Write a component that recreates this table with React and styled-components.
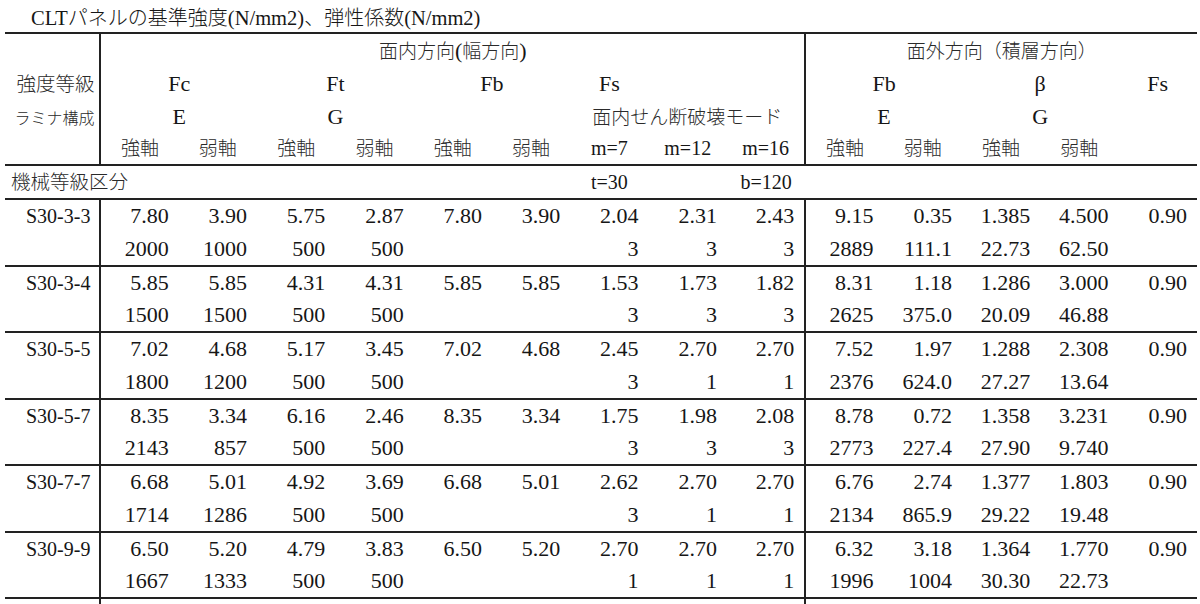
import React from "react";
import styled, { createGlobalStyle } from "styled-components";

const GlobalStyle = createGlobalStyle`
  html, body { margin: 0; padding: 0; background: #fff; }
  body {
    width: 1200px; height: 604px; overflow: hidden;
    font-family: "Liberation Serif", "Noto Sans CJK JP", serif;
    color: #161616;
  }
`;

const Page = styled.div`
  display: flex;
  flex-direction: column;
`;

const Title = styled.div`
  height: 32px;
  line-height: 34px;
  padding-left: 31px;
  font-size: 20.5px;
  white-space: nowrap;
`;

const Sheet = styled.table`
  table-layout: fixed;
  border-collapse: collapse;
  width: 1192px;
  margin-left: 5px;
`;

const Row = styled.tr`
  height: ${(p) => p.$h}px;
`;

const Cell = styled.td`
  padding: 0 ${(p) => (p.$align === "right" ? 10 : p.$align === "left" ? 6 : 0)}px 0
    ${(p) => (p.$align === "left" ? 6 : 0)}px;
  text-align: ${(p) => p.$align || "center"};
  font-size: ${(p) => p.$size || 22}px;
  vertical-align: middle;
  white-space: nowrap;
  border-right: ${(p) => (p.$divider ? "2px solid #222" : "none")};
  border-top: ${(p) => (p.$rule ? "2px solid #222" : "none")};
  line-height: 1;
`;

const Jp = styled.span`
  font-family: "Noto Sans CJK JP", sans-serif;
  font-weight: 300;
  color: #2a2a2a;
  font-size: ${(p) => p.$size || 19}px;
`;

const TitleJp = styled.span`
  font-family: "Noto Sans CJK JP", sans-serif;
  font-weight: 300;
  font-size: 20px;
`;

const NUM_COLS = 14;

const data = [
  {
    label: "S30-3-3",
    a: ["7.80", "3.90", "5.75", "2.87", "7.80", "3.90", "2.04", "2.31", "2.43", "9.15", "0.35", "1.385", "4.500", "0.90"],
    b: ["2000", "1000", "500", "500", "", "", "3", "3", "3", "2889", "111.1", "22.73", "62.50", ""],
  },
  {
    label: "S30-3-4",
    a: ["5.85", "5.85", "4.31", "4.31", "5.85", "5.85", "1.53", "1.73", "1.82", "8.31", "1.18", "1.286", "3.000", "0.90"],
    b: ["1500", "1500", "500", "500", "", "", "3", "3", "3", "2625", "375.0", "20.09", "46.88", ""],
  },
  {
    label: "S30-5-5",
    a: ["7.02", "4.68", "5.17", "3.45", "7.02", "4.68", "2.45", "2.70", "2.70", "7.52", "1.97", "1.288", "2.308", "0.90"],
    b: ["1800", "1200", "500", "500", "", "", "3", "1", "1", "2376", "624.0", "27.27", "13.64", ""],
  },
  {
    label: "S30-5-7",
    a: ["8.35", "3.34", "6.16", "2.46", "8.35", "3.34", "1.75", "1.98", "2.08", "8.78", "0.72", "1.358", "3.231", "0.90"],
    b: ["2143", "857", "500", "500", "", "", "3", "3", "3", "2773", "227.4", "27.90", "9.740", ""],
  },
  {
    label: "S30-7-7",
    a: ["6.68", "5.01", "4.92", "3.69", "6.68", "5.01", "2.62", "2.70", "2.70", "6.76", "2.74", "1.377", "1.803", "0.90"],
    b: ["1714", "1286", "500", "500", "", "", "3", "1", "1", "2134", "865.9", "29.22", "19.48", ""],
  },
  {
    label: "S30-9-9",
    a: ["6.50", "5.20", "4.79", "3.83", "6.50", "5.20", "2.70", "2.70", "2.70", "6.32", "3.18", "1.364", "1.770", "0.90"],
    b: ["1667", "1333", "500", "500", "", "", "1", "1", "1", "1996", "1004", "30.30", "22.73", ""],
  },
];

function ValueCells({ values, rule }) {
  return values.map((v, i) => (
    <Cell key={i} $align="right" $divider={i === 8} $rule={rule}>
      {v}
    </Cell>
  ));
}

const axes = ["強軸", "弱軸", "強軸", "弱軸", "強軸", "弱軸"];

export default function App() {
  return (
    <Page>
      <GlobalStyle />
      <Title>
        CLT<TitleJp>パネルの基準強度</TitleJp>(N/mm2)<TitleJp>、弾性係数</TitleJp>(N/mm2)
      </Title>
      <Sheet>
        <colgroup>
          <col style={{ width: 95 }} />
          {Array.from({ length: NUM_COLS }, (_, i) => (
            <col key={i} style={{ width: 78 }} />
          ))}
        </colgroup>
        <tbody>
          <Row $h={34}>
            <Cell $divider $rule />
            <Cell colSpan={9} $divider $rule>
              <Jp>面内方向</Jp>(<Jp>幅方向</Jp>)
            </Cell>
            <Cell colSpan={5} $rule>
              <Jp>面外方向（積層方向）</Jp>
            </Cell>
          </Row>
          <Row $h={34}>
            <Cell $divider $align="right" style={{ paddingRight: 5 }}>
              <Jp $size={19.5}>強度等級</Jp>
            </Cell>
            <Cell colSpan={2}>Fc</Cell>
            <Cell colSpan={2}>Ft</Cell>
            <Cell colSpan={2}>Fb</Cell>
            <Cell>Fs</Cell>
            <Cell />
            <Cell $divider />
            <Cell colSpan={2}>Fb</Cell>
            <Cell colSpan={2}>β</Cell>
            <Cell>Fs</Cell>
          </Row>
          <Row $h={31}>
            <Cell $divider $align="right" style={{ paddingRight: 5 }}>
              <Jp $size={16}>ラミナ構成</Jp>
            </Cell>
            <Cell colSpan={2}>E</Cell>
            <Cell colSpan={2}>G</Cell>
            <Cell colSpan={2} />
            <Cell colSpan={3} $divider>
              <Jp>面内せん断破壊モード</Jp>
            </Cell>
            <Cell colSpan={2}>E</Cell>
            <Cell colSpan={2}>G</Cell>
            <Cell />
          </Row>
          <Row $h={33}>
            <Cell $divider />
            {axes.map((t, i) => (
              <Cell key={i}>
                <Jp>{t}</Jp>
              </Cell>
            ))}
            <Cell $size={20}>m=7</Cell>
            <Cell $size={20}>m=12</Cell>
            <Cell $size={20} $divider>
              m=16
            </Cell>
            {axes.slice(0, 4).map((t, i) => (
              <Cell key={i}>
                <Jp>{t}</Jp>
              </Cell>
            ))}
            <Cell />
          </Row>
          <Row $h={34}>
            <Cell colSpan={7} $align="left" $rule>
              <Jp $size={19.5}>機械等級区分</Jp>
            </Cell>
            <Cell $size={20} $rule>
              t=30
            </Cell>
            <Cell $rule />
            <Cell $size={20} $rule>
              b=120
            </Cell>
            <Cell colSpan={5} $rule />
          </Row>
          {data.map((d) => (
            <React.Fragment key={d.label}>
              <Row $h={33.5}>
                <Cell $divider $rule $size={20} style={{ paddingLeft: 12 }}>
                  {d.label}
                </Cell>
                <ValueCells values={d.a} rule />
              </Row>
              <Row $h={33}>
                <Cell $divider />
                <ValueCells values={d.b} />
              </Row>
            </React.Fragment>
          ))}
          <Row $h={30}>
            <Cell $divider $rule />
            <ValueCells values={Array(14).fill("")} rule />
          </Row>
        </tbody>
      </Sheet>
    </Page>
  );
}
